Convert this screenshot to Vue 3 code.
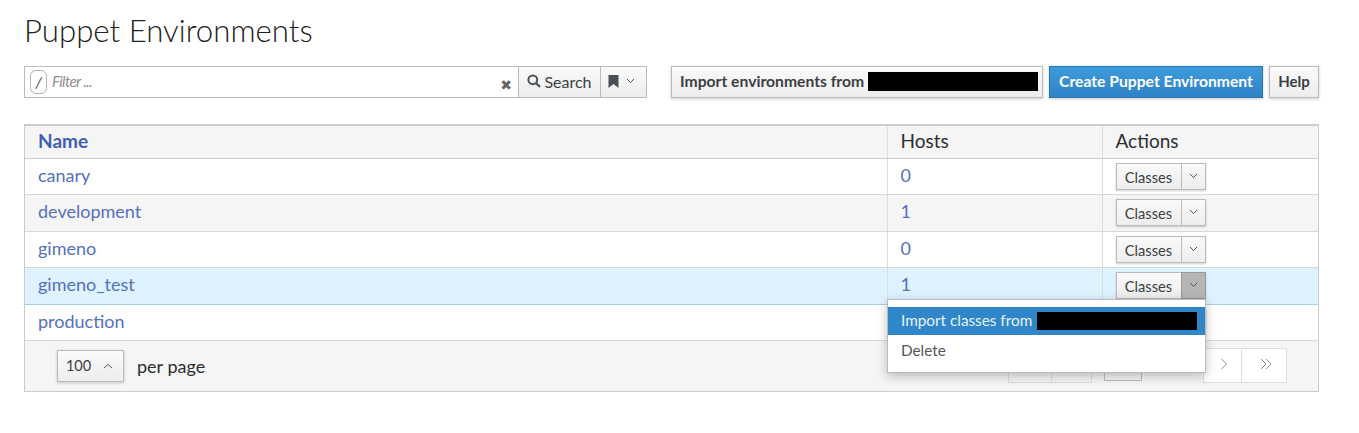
<script setup>
import { ref } from 'vue'

const rows = ref([
  { name: 'canary', hosts: 0, height: 36 },
  { name: 'development', hosts: 1, height: 37 },
  { name: 'gimeno', hosts: 0, height: 36 },
  { name: 'gimeno_test', hosts: 1, height: 37, open: true },
  { name: 'production', hosts: null, height: 36 }
])
</script>

<template>
  <div class="page">
    <h1 class="title">Puppet Environments</h1>

    <div class="toolbar">
      <div class="search">
        <div class="filter">
          <span class="slash">/</span>
          <span class="placeholder">Filter ...</span>
          <span class="clear">✖</span>
        </div>
        <button class="btn search-btn">
          <svg width="14" height="14" viewBox="0 0 14 14">
            <circle cx="5.8" cy="5.8" r="4.4" fill="none" stroke="#484f56" stroke-width="2" />
            <path d="M9 9l4 4" stroke="#484f56" stroke-width="2.2" />
          </svg>
          Search
        </button>
        <button class="btn bookmark-btn">
          <svg width="11" height="13" viewBox="0 0 11 13">
            <path d="M0.5 0h10v13l-5-4-5 4z" fill="#484f56" />
          </svg>
          <svg class="caret" width="9" height="6" viewBox="0 0 9 6">
            <path d="M1 1l3.5 3.5L8 1" fill="none" stroke="#555" stroke-width="1" />
          </svg>
        </button>
      </div>
      <button class="btn action import">
        Import environments from
        <span class="redacted"></span>
      </button>
      <button class="btn action primary">Create Puppet Environment</button>
      <button class="btn action help">Help</button>
    </div>

    <div class="panel">
      <table class="grid">
        <colgroup>
          <col class="col-name" />
          <col class="col-hosts" />
          <col />
        </colgroup>
        <thead>
          <tr>
            <th class="sortable">Name</th>
            <th>Hosts</th>
            <th>Actions</th>
          </tr>
        </thead>
        <tbody>
          <tr v-for="row in rows" :key="row.name" :class="{ hovered: row.open }" :style="{ height: row.height + 'px' }">
            <td class="link">{{ row.name }}</td>
            <td class="link">{{ row.hosts }}</td>
            <td class="actions">
              <div class="split">
                <button class="btn classes">Classes</button>
                <button class="btn toggle" :class="{ active: row.open }">
                  <svg width="9" height="6" viewBox="0 0 9 6">
                    <path d="M1 1l3.5 3.5L8 1" fill="none" stroke="#555" stroke-width="1" />
                  </svg>
                </button>
              </div>
            </td>
          </tr>
        </tbody>
      </table>

      <div class="footer">
        <div class="per-page">
          <button class="btn page-size">
            100
            <svg width="10" height="6" viewBox="0 0 10 6">
              <path d="M1 5l4-3.5L9 5" fill="none" stroke="#555" stroke-width="1" />
            </svg>
          </button>
          <span class="per-label">per page</span>
        </div>
        <div class="pager">
          <span class="cell first"></span>
          <span class="cell second"></span>
          <span class="cell current"></span>
          <span class="cell next">
            <svg width="8" height="12" viewBox="0 0 8 12">
              <path d="M1.5 1l5 5-5 5" fill="none" stroke="#8a8d90" stroke-width="1" />
            </svg>
          </span>
          <span class="cell last">
            <svg width="12" height="12" viewBox="0 0 12 12">
              <path d="M1 1l5 5-5 5M6 1l5 5-5 5" fill="none" stroke="#8a8d90" stroke-width="1" />
            </svg>
          </span>
        </div>
      </div>

      <div class="menu">
        <div class="menu-item selected">
          Import classes from
          <span class="redacted menu-redacted"></span>
        </div>
        <div class="menu-item">Delete</div>
      </div>
    </div>
  </div>
</template>

<style scoped>
.page {
  width: 1359px;
  height: 433px;
  box-sizing: border-box;
  padding: 14px 40px 0 24px;
  font-family: Lato, "Open Sans", sans-serif;
  color: #2d2d30;
}

.title {
  margin: 0;
  height: 34px;
  font-size: 31.2px;
  line-height: 33px;
  font-weight: 300;
  color: #222;
}

.toolbar {
  display: flex;
  gap: 6px;
  margin-top: 18px;
  height: 32px;
}

.btn {
  font-family: inherit;
  font-size: 15.7px;
  font-weight: 700;
  color: #3c3f42;
  background: linear-gradient(#fafafa, #ededed);
  border: 1px solid #bbb;
  box-sizing: border-box;
  padding: 0;
  display: flex;
  align-items: center;
  justify-content: center;
}

.toolbar .btn {
  padding-bottom: 2px;
}

.search {
  display: flex;
  width: 623px;
  margin-right: 18px;
}

.filter {
  width: 494px;
  box-sizing: border-box;
  border: 1px solid #bbb;
  border-right: 0;
  display: flex;
  align-items: center;
  padding-left: 5px;
}

.slash {
  box-sizing: border-box;
  width: 17px;
  height: 24px;
  border: 1px solid #b5b5b5;
  border-radius: 6px;
  font-size: 16px;
  font-style: italic;
  color: #555;
  text-align: center;
  line-height: 22px;
  margin-right: 5px;
}

.placeholder {
  font-size: 15px;
  letter-spacing: -0.6px;
  font-style: italic;
  color: #8f8f8f;
  padding-bottom: 2px;
}

.clear {
  margin-left: auto;
  margin-right: 6px;
  margin-top: 5px;
  font-size: 14px;
  color: #666;
  font-family: "DejaVu Sans", sans-serif;
}

.search-btn {
  width: 82px;
  gap: 3px;
  font-size: 16px;
  font-weight: 400;
  border-right: 0;
}

.bookmark-btn {
  width: 47px;
  gap: 7px;
  padding-right: 4px;
}

.import {
  width: 372px;
  justify-content: flex-start;
  padding-left: 8px;
  gap: 4px;
}

.action {
  box-shadow: 0 1px 3px rgba(0, 0, 0, 0.2);
}

.redacted {
  display: block;
  width: 170px;
  height: 19px;
  background: #000;
}

.primary {
  width: 214px;
  color: #fff;
  background: linear-gradient(#3f9bdc, #2e82c6);
  border-color: #2a78b8;
}

.help {
  width: 50px;
  font-size: 15px;
}

.panel {
  position: relative;
  margin-top: 26px;
  width: 1295px;
  height: 268px;
  box-sizing: border-box;
  border: 1px solid #ccc;
  border-top: 2px solid #ccc;
}

.grid {
  width: 100%;
  table-layout: fixed;
  border-collapse: collapse;
  font-size: 18px;
}

.col-name {
  width: 862px;
}

.col-hosts {
  width: 215px;
}

th {
  height: 32px;
  padding: 0 13px 2px;
  box-sizing: border-box;
  text-align: left;
  font-size: 19px;
  font-weight: 400;
  background: #f5f5f5;
  border-bottom: 1px solid #ccc;
  border-left: 1px solid #ddd;
}

th:first-child,
td:first-child {
  border-left: 0;
}

th.sortable {
  color: #3f5fb5;
  font-weight: 700;
}

td {
  padding: 4px 13px 0;
  line-height: 24px;
  vertical-align: top;
  border-bottom: 1px solid #d8d8d8;
  border-left: 1px solid #ddd;
  background: #fff;
}

td.actions {
  padding-top: 4px;
}

tbody tr:nth-child(even) td {
  background: #f5f5f5;
}

tbody tr.hovered td {
  background: #def3ff;
  border-bottom-color: #a8cfe8;
}

.link {
  color: #5570bd;
}

.split {
  display: flex;
  height: 27px;
  box-shadow: 0 1px 2px rgba(0, 0, 0, 0.2);
  width: 90px;
}

.classes {
  width: 65px;
  font-size: 14.7px;
  font-weight: 400;
  border-right: 0;
  padding-top: 1px;
}

.toggle {
  width: 25px;
}

.toggle.active {
  background: #b5b5b5;
  border-color: #999;
}

.footer {
  height: 50px;
  background: #f5f5f5;
  display: flex;
  justify-content: space-between;
  align-items: center;
  padding: 0 31px 0 32px;
}

.per-page {
  display: flex;
  align-items: center;
  gap: 13px;
}

.page-size {
  width: 67px;
  height: 32px;
  gap: 12px;
  padding-right: 2px;
  font-size: 14.5px;
  font-weight: 400;
  box-shadow: 0 1px 3px rgba(0, 0, 0, 0.2);
}

.per-label {
  font-size: 18px;
}

.pager {
  display: flex;
  height: 35px;
  margin-bottom: 1px;
}

.cell {
  box-sizing: border-box;
  border: 1px solid #ddd;
  display: flex;
  align-items: center;
  justify-content: center;
  background: #f5f5f5;
}

.first {
  width: 44px;
}

.second {
  width: 40px;
  border-left: 0;
  margin-right: 12px;
}

.current {
  width: 38px;
  height: 33px;
  border-color: #bbb;
  margin-right: 61px;
}

.next {
  width: 39px;
  background: #fff;
  padding: 0 0 3px 3px;
}

.last {
  width: 45px;
  background: #fff;
  border-left: 0;
  padding: 0 0 3px 4px;
}

.menu {
  position: absolute;
  left: 862px;
  top: 173px;
  width: 319px;
  height: 74px;
  box-sizing: border-box;
  padding-top: 7px;
  background: #fff;
  border: 1px solid #bbb;
  box-shadow: 0 3px 10px rgba(0, 0, 0, 0.25);
}

.menu-item {
  height: 30px;
  display: flex;
  align-items: center;
  gap: 5px;
  padding: 0 0 2px 13px;
  box-sizing: border-box;
  font-size: 15.3px;
  color: #555;
}

.menu-item.selected {
  height: 28px;
  margin-bottom: 1px;
  background: #2f86c8;
  color: #e8f2fa;
}

.menu-redacted {
  width: 160px;
  height: 18px;
  margin-top: 2px;
}
</style>
